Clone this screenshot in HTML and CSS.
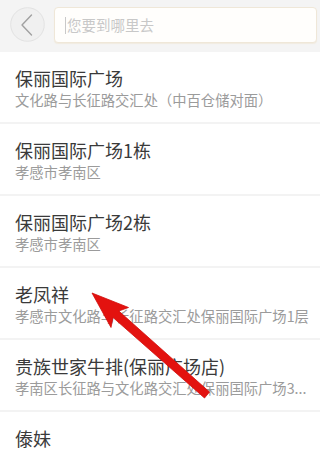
FILE: index.html
```html
<!DOCTYPE html>
<html lang="zh">
<head>
<meta charset="utf-8">
<title>搜索</title>
<link rel="stylesheet" href="styles.css">
</head>
<body>
<div class="page">
  <header class="header">
    <div class="back">
      <svg width="35" height="35" viewBox="0 0 35 35">
        <circle cx="17.5" cy="17.5" r="16.8" fill="#f0f0f0" stroke="#e2e2e2" stroke-width="1"/>
        <path d="M21.5 8 L12 18 L21.5 28" fill="none" stroke="#a0a0a0" stroke-width="1.4" stroke-linecap="round" stroke-linejoin="round"/>
      </svg>
    </div>
    <div class="search">
      <span class="cursor"></span>
      <span class="placeholder">您要到哪里去</span>
    </div>
  </header>
  <ul class="list">
    <li class="item">
      <div class="title">保丽国际广场</div>
      <div class="sub">文化路与长征路交汇处（中百仓储对面）</div>
    </li>
    <li class="item">
      <div class="title">保丽国际广场1栋</div>
      <div class="sub">孝感市孝南区</div>
    </li>
    <li class="item">
      <div class="title">保丽国际广场2栋</div>
      <div class="sub">孝感市孝南区</div>
    </li>
    <li class="item">
      <div class="title">老凤祥</div>
      <div class="sub">孝感市文化路与长征路交汇处保丽国际广场1层</div>
    </li>
    <li class="item">
      <div class="title">贵族世家牛排(保丽广场店)</div>
      <div class="sub">孝南区长征路与文化路交汇处保丽国际广场3...</div>
    </li>
    <li class="item">
      <div class="title">傣妹</div>
      <div class="sub">孝感市孝南区</div>
    </li>
  </ul>
  <svg class="arrow" width="320" height="449" viewBox="0 0 320 449">
    <polygon points="92,293 128.5,307.5 118.8,311 209.5,392 204.5,398 113,317.5 111,327.5" fill="#e3120f" stroke="#d00c0a" stroke-width="0.8" stroke-linejoin="round"/>
  </svg>
</div>
</body>
</html>
```

FILE: styles.css
```css
html, body {
  margin: 0;
  padding: 0;
}
body {
  width: 320px;
  height: 449px;
  overflow: hidden;
  background: #f3f3f3;
  font-family: "Noto Sans CJK SC", "Noto Sans", sans-serif;
}
.page {
  position: relative;
  width: 320px;
  height: 449px;
  overflow: hidden;
}
.header {
  display: flex;
  align-items: flex-start;
  gap: 9px;
  height: 52px;
  box-sizing: border-box;
  padding: 7px 3px 0 10px;
  background: #f4f4f4;
}
.back {
  width: 35px;
  height: 35px;
  flex: none;
}
.back svg {
  display: block;
}
.search {
  flex: 1;
  height: 36px;
  box-sizing: border-box;
  border: 1px solid #efe7d8;
  border-radius: 4px;
  background: #fffefc;
  display: flex;
  align-items: center;
  padding-left: 10px;
  box-shadow: 0 1px 1px #f1ebe0;
}
.cursor {
  width: 1px;
  height: 17px;
  background: #c9c9c9;
  margin-right: 1px;
}
.placeholder {
  font-size: 14.5px;
  color: #c8c8c8;
  line-height: 20px;
}
.list {
  list-style: none;
  margin: 0;
  padding: 0;
  display: flex;
  flex-direction: column;
  gap: 2px;
}
.item {
  background: #ffffff;
  height: 70px;
  box-sizing: border-box;
  padding: 14px 0 0 15px;
}
.title {
  font-size: 18px;
  line-height: 24px;
  color: #3a3a3a;
  white-space: nowrap;
}
.sub {
  font-size: 14.3px;
  line-height: 20px;
  color: #9b9b9b;
  white-space: nowrap;
  overflow: hidden;
}
.arrow {
  position: absolute;
  left: 0;
  top: 0;
  pointer-events: none;
}
```
